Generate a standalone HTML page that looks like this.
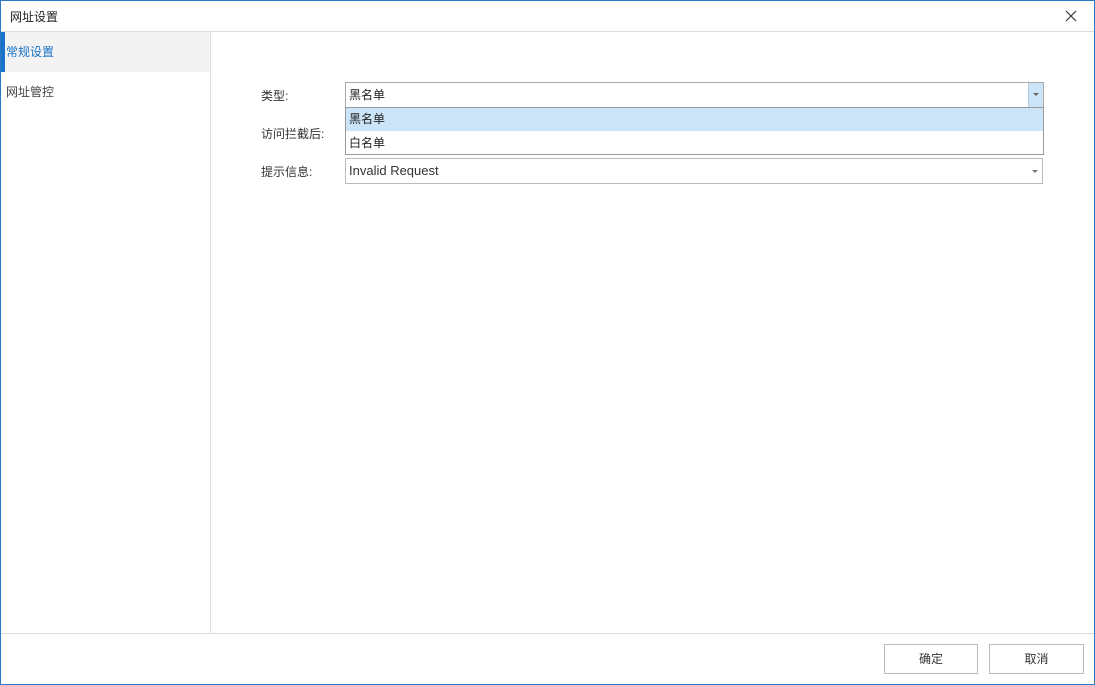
<!DOCTYPE html>
<html><head><meta charset="utf-8"><style>
*{margin:0;padding:0;box-sizing:border-box}
body{width:1095px;height:685px;position:relative;background:#fff;font-family:"Liberation Sans","Noto Sans CJK SC",sans-serif;font-size:12px;color:#333;overflow:hidden}
.frame{position:absolute;left:0;top:0;width:1095px;height:685px;border:1px solid #2b79c2}
.abs{position:absolute}
</style></head><body>
<div class="frame"></div>
<div class="abs" style="left:10px;top:8px;font-size:12px;color:#222">网址设置</div>
<svg class="abs" style="left:1065px;top:10px" width="12" height="12"><path d="M1 1L11 11M11 1L1 11" stroke="#333" stroke-width="1.2"/></svg>
<div class="abs" style="left:1px;top:31px;width:1093px;height:1px;background:#ddd"></div>
<div class="abs" style="left:210px;top:32px;width:1px;height:601px;background:#ddd"></div>
<div class="abs" style="left:1px;top:32px;width:209px;height:40px;background:#f3f3f3"></div>
<div class="abs" style="left:1px;top:32px;width:4px;height:40px;background:#1a73c8"></div>
<div class="abs" style="left:6px;top:43px;color:#1a73c8">常规设置</div>
<div class="abs" style="left:6px;top:83px;color:#444">网址管控</div>
<div class="abs" style="left:261px;top:87px">类型:</div>
<div class="abs" style="left:261px;top:125px">访问拦截后:</div>
<div class="abs" style="left:261px;top:163px">提示信息:</div>
<div class="abs" style="left:345px;top:82px;width:699px;height:26px;border:1px solid #aaa;background:#fff"></div>
<div class="abs" style="left:1028px;top:83px;width:15px;height:24px;background:#cde4f7;border-left:1px solid #aac8e4"></div>
<svg class="abs" style="left:1033px;top:93px" width="6" height="4"><path d="M0 0H6L3 3Z" fill="#666"/></svg>
<div class="abs" style="left:349px;top:86px;color:#222">黑名单</div>
<div class="abs" style="left:345px;top:107px;width:699px;height:48px;border:1px solid #999;background:#fff"></div>
<div class="abs" style="left:346px;top:108px;width:697px;height:23px;background:#cce4f7"></div>
<div class="abs" style="left:349px;top:110px;color:#222">黑名单</div>
<div class="abs" style="left:349px;top:134px;color:#222">白名单</div>
<div class="abs" style="left:345px;top:158px;width:698px;height:26px;border:1px solid #bbb;background:#fff"></div>
<div class="abs" style="left:349px;top:163px;font-size:13px;color:#333">Invalid Request</div>
<svg class="abs" style="left:1032px;top:170px" width="6" height="4"><path d="M0 0H6L3 3Z" fill="#777"/></svg>
<div class="abs" style="left:1px;top:633px;width:1093px;height:1px;background:#ddd"></div>
<div class="abs" style="left:884px;top:644px;width:94px;height:30px;border:1px solid #bbb;text-align:center;line-height:28px">确定</div>
<div class="abs" style="left:989px;top:644px;width:95px;height:30px;border:1px solid #bbb;text-align:center;line-height:28px">取消</div>
</body></html>
